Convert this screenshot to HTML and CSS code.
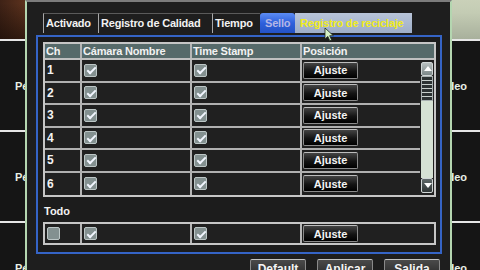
FILE: index.html
```html
<!DOCTYPE html>
<html lang="es">
<head>
  <meta charset="UTF-8" />
  <meta name="viewport" content="width=device-width, initial-scale=1" />
  <title>Registro - Sello</title>
  <link rel="stylesheet" href="styles.css">
</head>
<body>
  <div class="screen">
    <div class="cams">
      <div class="cam cam-brown"></div>
      <div class="cam"></div>
      <div class="cam"></div>
      <div class="cam cam-light"></div>
      <div class="cam">Pérdida de Video</div>
      <div class="cam"></div>
      <div class="cam"></div>
      <div class="cam">Pérdida de Video</div>
      <div class="cam">Pérdida de Video</div>
      <div class="cam"></div>
      <div class="cam"></div>
      <div class="cam">Pérdida de Video</div>
      <div class="cam">Pérdida de Video</div>
      <div class="cam"></div>
      <div class="cam"></div>
      <div class="cam">Pérdida de Video</div>
    </div>

    <div class="dialog">
      <div class="tabs">
        <div class="tab tab-1">Activado</div>
        <div class="tab tab-2">Registro de Calidad</div>
        <div class="tab tab-3">Tiempo</div>
        <div class="tab tab-4 tab-active">Sello</div>
        <div class="tab tab-5 tab-hover">Registro de reciclaje</div>
      </div>

      <div class="panel">
        <div class="table">
          <div class="thead">
            <div class="cell">Ch</div>
            <div class="cell">Cámara Nombre</div>
            <div class="cell">Time Stamp</div>
            <div class="cell">Posición</div>
          </div>
          <div class="tbody">
            <div class="rows">
              <div class="row">
                <div class="cell num">1</div>
                <div class="cell"><span class="cb on"></span></div>
                <div class="cell"><span class="cb on"></span></div>
                <div class="cell"><button class="btn-ajuste">Ajuste</button></div>
              </div>
              <div class="row">
                <div class="cell num">2</div>
                <div class="cell"><span class="cb on"></span></div>
                <div class="cell"><span class="cb on"></span></div>
                <div class="cell"><button class="btn-ajuste">Ajuste</button></div>
              </div>
              <div class="row">
                <div class="cell num">3</div>
                <div class="cell"><span class="cb on"></span></div>
                <div class="cell"><span class="cb on"></span></div>
                <div class="cell"><button class="btn-ajuste">Ajuste</button></div>
              </div>
              <div class="row">
                <div class="cell num">4</div>
                <div class="cell"><span class="cb on"></span></div>
                <div class="cell"><span class="cb on"></span></div>
                <div class="cell"><button class="btn-ajuste">Ajuste</button></div>
              </div>
              <div class="row">
                <div class="cell num">5</div>
                <div class="cell"><span class="cb on"></span></div>
                <div class="cell"><span class="cb on"></span></div>
                <div class="cell"><button class="btn-ajuste">Ajuste</button></div>
              </div>
              <div class="row">
                <div class="cell num">6</div>
                <div class="cell"><span class="cb on"></span></div>
                <div class="cell"><span class="cb on"></span></div>
                <div class="cell"><button class="btn-ajuste">Ajuste</button></div>
              </div>
            </div>
            <div class="scroll">
              <div class="scroll-up"></div>
              <div class="scroll-thumb"></div>
              <div class="scroll-track"></div>
              <div class="scroll-down"></div>
            </div>
          </div>
        </div>

        <div class="todo-label">Todo</div>
        <div class="todo">
          <div class="row">
            <div class="cell"><span class="cb"></span></div>
            <div class="cell"><span class="cb on"></span></div>
            <div class="cell"><span class="cb on"></span></div>
            <div class="cell"><button class="btn-ajuste">Ajuste</button></div>
          </div>
        </div>
      </div>

      <div class="actions">
        <button class="btn">Default</button>
        <button class="btn">Aplicar</button>
        <button class="btn">Salida</button>
      </div>
    </div>

    <svg class="cursor" width="11" height="15" viewBox="0 0 11 15">
      <path d="M1 1 L1 12 L3.8 9.4 L5.8 13.8 L7.6 13 L5.7 8.7 L9.4 8.7 Z" fill="#d6f2c6" stroke="#1e2a1e" stroke-width="0.8" />
    </svg>
  </div>
</body>
</html>
```

FILE: styles.css
```css
* {
  box-sizing: border-box;
  margin: 0;
  padding: 0;
}

body {
  background: #141414;
  font-family: 'Liberation Sans', Arial, sans-serif;
  font-weight: bold;
  font-size: 11px;
  color: #f2f2f2;
  overflow: hidden;
}

.screen {
  position: relative;
  width: 480px;
  height: 270px;
  overflow: hidden;
}

/* vista de camaras detras del menu */
.cams {
  display: grid;
  grid-template-columns: repeat(4, 119px);
  grid-auto-rows: 89px;
  gap: 2px;
  width: 482px;
  margin-top: -50px;
  background: #e6e6e6;
}

.cam {
  background: #151515;
  display: flex;
  align-items: center;
  justify-content: center;
  color: #e8f0e6;
  white-space: nowrap;
}

.cam-brown {
  background:
    linear-gradient(to bottom, rgba(0, 0, 0, 0) 60%, rgba(20, 10, 5, 0.6)),
    linear-gradient(to right, #3e2216, #7e4426 45%, #8e5030 70%, #5a3220);
}

.cam-light {
  background:
    radial-gradient(circle at 18% 78%, #3a4038 0, #3a4038 5px, rgba(0, 0, 0, 0) 8px),
    linear-gradient(to bottom, #dfe4cc, #c4ccb4 70%, #a8b09c);
}

/* menu */
.dialog {
  position: absolute;
  left: 25px;
  top: 0;
  width: 427px;
  height: 290px;
  background: #1e1e1e;
  border: 2px solid #b4d6b0;
  border-top-color: #7c7c7c;
  padding: 11px 8px 0 9px;
}

.tabs {
  display: flex;
  height: 20px;
  margin-left: 7px;
  margin-bottom: 2px;
}

.tab {
  height: 20px;
  line-height: 19px;
  padding: 0 0 0 2px;
  border-left: 1px solid #a8a8a8;
  border-top: 1px solid #5a5a5a;
  letter-spacing: -0.2px;
  white-space: nowrap;
}

.tab-1 { width: 55px; }
.tab-2 { width: 114px; }
.tab-3 { width: 48px; }
.tab-4 { width: 35px; }
.tab-5 { width: 117px; }

.tab-active {
  background: linear-gradient(to bottom, #5c8cf4, #2e60dc 50%, #2452c4);
  border: none;
  border-radius: 3px 3px 0 0;
  color: #b4b6e6;
  padding: 1px 0 0 5px;
}

.tab-hover {
  background: linear-gradient(to bottom, #b8c4d8, #9eaec8);
  border: none;
  color: #f0ec1c;
  padding: 1px 0 0 5px;
}

.panel {
  border: 2px solid #3564c6;
  background: #1c1c1c;
  padding: 5px 4px 7px 5px;
}

.table {
  border: 2px solid #c6c6c6;
  background: #202020;
}

.thead,
.row {
  display: grid;
  grid-template-columns: 37px 110px 110px 1fr;
}

.thead {
  height: 16px;
  background: #566a6a;
  border-bottom: 2px solid #c0c0c0;
  line-height: 14px;
}

.cell {
  border-right: 2px solid #b6b6b6;
  padding-left: 1px;
  display: flex;
  align-items: center;
  white-space: nowrap;
  letter-spacing: -0.2px;
}

.cell:last-child {
  border-right: none;
}

.tbody {
  display: flex;
}

.rows {
  flex: 1;
}

.row {
  height: 22.5px;
  border-bottom: 2px solid #b0b0b0;
}

.rows .row:last-child {
  border-bottom: none;
}

.num {
  font-size: 12px;
}

.row .cell {
  padding-left: 2px;
}

.cb {
  position: relative;
  display: block;
  width: 13px;
  height: 13px;
  background: #839090;
  border: 1px solid #bcc6c6;
  border-radius: 2px;
}

.cb.on::after {
  content: '';
  position: absolute;
  left: 3.5px;
  top: 0.5px;
  width: 3px;
  height: 7px;
  border: solid #f2f6ff;
  border-width: 0 2px 2px 0;
  transform: rotate(45deg);
}

.btn-ajuste {
  width: 55px;
  height: 17px;
  margin-left: -1px;
  background: linear-gradient(to bottom, #444, #141414 55%, #000);
  border: 1px solid #8c8c8c;
  border-top-color: #bdbdbd;
  border-radius: 2px;
  color: #f4f4f4;
  font-family: inherit;
  font-weight: bold;
  font-size: 11px;
}

.scroll {
  width: 14px;
  display: flex;
  flex-direction: column;
  padding: 2px 1px;
}

.scroll-up,
.scroll-down {
  position: relative;
  height: 14px;
  background: linear-gradient(to bottom, #b8c0c0, #7c8888);
  border: 1px solid #d0d6d6;
  border-radius: 2px;
}

.scroll-down {
  background: linear-gradient(to bottom, #606a6a, #2e3434);
  height: 15px;
}

.scroll-up::after,
.scroll-down::after {
  content: '';
  position: absolute;
  left: 2px;
  border-left: 4px solid transparent;
  border-right: 4px solid transparent;
}

.scroll-up::after {
  top: 3px;
  border-bottom: 5px solid #fff;
}

.scroll-down::after {
  top: 4px;
  border-top: 5px solid #fff;
}

.scroll-thumb {
  height: 25px;
  background: repeating-linear-gradient(to bottom, #2c3232 0, #2c3232 3px, #c8d0cc 3px, #c8d0cc 4px);
  border: 1px solid #a8b0b0;
}

.scroll-track {
  flex: 1;
  background: #d6e2d4;
}

.todo-label {
  margin-top: 6px;
  height: 16px;
  line-height: 16px;
  padding-left: 1px;
}

.todo {
  margin-top: 3px;
  border: 2px solid #c6c6c6;
  background: #202020;
}

.todo .row {
  height: 19px;
  border-bottom: none;
}

.actions {
  display: flex;
  justify-content: flex-end;
  gap: 11px;
  margin-top: 5px;
  padding-right: 2px;
}

.btn {
  width: 56px;
  height: 20px;
  background: linear-gradient(to bottom, #4a4a4a, #262626);
  border: 1px solid #8a8a8a;
  border-top-color: #c4c4c4;
  border-radius: 2px;
  color: #f4f4f4;
  font-family: inherit;
  font-weight: bold;
  font-size: 12px;
}

.cursor {
  position: absolute;
  left: 324px;
  top: 27px;
}
```
